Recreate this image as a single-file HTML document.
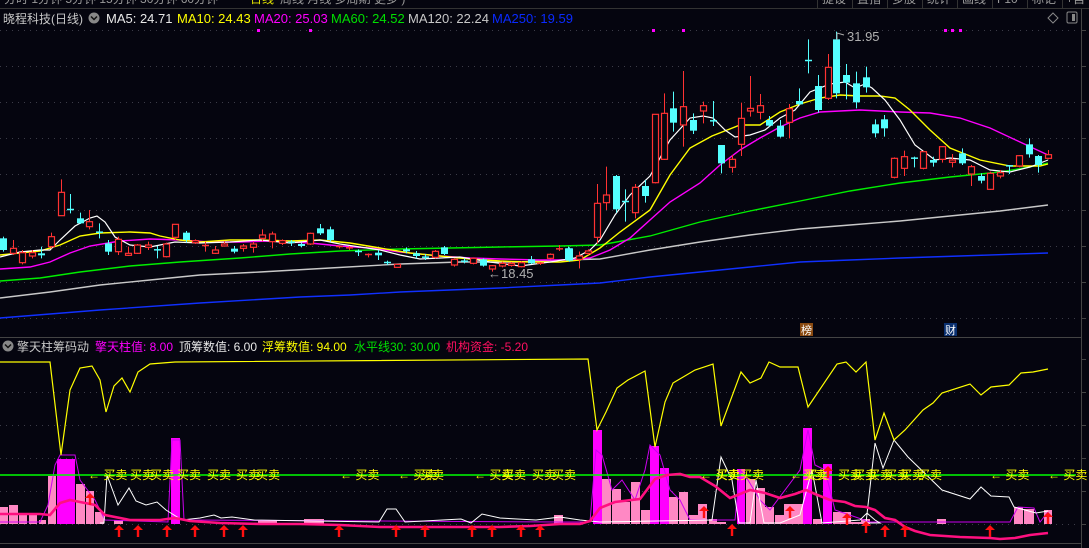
<!DOCTYPE html>
<html><head><meta charset="utf-8">
<style>
html,body{margin:0;padding:0;background:#05050f;width:1089px;height:548px;overflow:hidden;}
svg{display:block;font-family:"Liberation Sans","Noto Sans CJK SC",sans-serif;}
</style></head>
<body>
<svg id="s" width="1089" height="548" viewBox="0 0 1089 548" xmlns="http://www.w3.org/2000/svg">
<rect width="1089" height="548" fill="#05050f"/>
<g fill="#9a9a9a" font-size="12">
<text x="4" y="3">分时  1分钟  5分钟  15分钟  30分钟  60分钟</text>
<text x="250" y="3" fill="#e0e000">日线</text>
<text x="280" y="3">周线  月线  多周期  更多 )</text>
</g>
<line x1="0" y1="8.5" x2="1089" y2="8.5" stroke="#333"/>
<g stroke="#333"><line x1="817.5" y1="0" x2="817.5" y2="8"/><line x1="852.5" y1="0" x2="852.5" y2="8"/><line x1="887.5" y1="0" x2="887.5" y2="8"/><line x1="922.5" y1="0" x2="922.5" y2="8"/><line x1="957.5" y1="0" x2="957.5" y2="8"/><line x1="992.5" y1="0" x2="992.5" y2="8"/><line x1="1027.5" y1="0" x2="1027.5" y2="8"/><line x1="1062.5" y1="0" x2="1062.5" y2="8"/></g>
<g fill="#9a9a9a" font-size="12"><text x="822" y="3">提设</text><text x="857" y="3">置指</text><text x="892" y="3">多股</text><text x="927" y="3">统计</text><text x="962" y="3">画线</text><text x="997" y="3">F10</text><text x="1032" y="3">标记</text><text x="1066" y="3">+自</text></g>

<text x="3" y="23" font-size="12" fill="#c8c8c8">晓程科技(日线)</text>
<circle cx="94" cy="18" r="5.5" fill="#888"/><path d="M91,16.5 L94,19.5 L97,16.5" stroke="#111" stroke-width="1.5" fill="none"/>
<g font-size="13">
<text x="106" y="23" fill="#e8e8e8">MA5: 24.71</text>
<text x="177" y="23" fill="#ffff00">MA10: 24.43</text>
<text x="254" y="23" fill="#ff00ff">MA20: 25.03</text>
<text x="331" y="23" fill="#00e000">MA60: 24.52</text>
<text x="408" y="23" fill="#c8c8c8">MA120: 22.24</text>
<text x="492" y="23" fill="#0a2aff">MA250: 19.59</text>
</g>
<path d="M1053,13 L1058,18 L1053,23 L1048,18 Z" stroke="#888" fill="none"/>
<rect x="1067" y="12" width="10" height="11" rx="1.5" stroke="#888" fill="none"/><rect x="1072" y="14" width="3" height="7" fill="#888"/>

<g id="grid" stroke="#3c3c48" stroke-dasharray="1,5"></g>
<line x1="1081.5" y1="9" x2="1081.5" y2="548" stroke="#444"/>
<line x1="0" y1="337.5" x2="1081" y2="337.5" stroke="#444"/>
<line x1="0" y1="543.5" x2="1081" y2="543.5" stroke="#444"/>

<g id="ma" fill="none" stroke-width="1.2"></g>
<g id="cand"></g>

<g fill="#ff00ff"><rect x="257" y="29" width="3" height="3"/><rect x="309" y="29" width="3" height="3"/><rect x="652" y="29" width="3" height="3"/><rect x="682" y="29" width="3" height="3"/><rect x="944" y="29" width="3" height="3"/><rect x="951" y="29" width="3" height="3"/><rect x="959" y="29" width="3" height="3"/></g>
<path d="M837,33 L837,40 M837,33 L844,35" stroke="#aaa" fill="none"/>
<text x="847" y="41" font-size="13" fill="#b0b0b0">31.95</text>
<text x="488" y="278" font-size="13" fill="#b0b0b0">←18.45</text>
<rect x="800" y="323" width="13" height="13" fill="#8a4a10"/><text x="801" y="334" font-size="11" fill="#fff">榜</text>
<rect x="944" y="323" width="13" height="13" fill="#0a3070"/><text x="945" y="334" font-size="11" fill="#fff">财</text>

<circle cx="8" cy="346" r="5.5" fill="#888"/><path d="M5,344.5 L8,347.5 L11,344.5" stroke="#111" stroke-width="1.5" fill="none"/>
<g font-size="12">
<text x="17" y="351" fill="#c8c8c8">擎天柱筹码动</text>
<text x="95" y="351" fill="#ff00ff">擎天柱值: 8.00</text>
<text x="179" y="351" fill="#e8e8e8">顶筹数值: 6.00</text>
<text x="262" y="351" fill="#ffff00">浮筹数值: 94.00</text>
<text x="354" y="351" fill="#00e000">水平线30: 30.00</text>
<text x="446" y="351" fill="#ff1060">机构资金: -5.20</text>
</g>
<g id="ind"></g>
</svg>
<script>
var NS="http://www.w3.org/2000/svg";
function el(p,t,a){var e=document.createElementNS(NS,t);for(var k in a)e.setAttribute(k,a[k]);p.appendChild(e);return e;}
var g=document.getElementById('grid');
[30,66,102,138,174,210,246,282,318,392,425,458,491,524].forEach(function(y){el(g,'line',{x1:0,y1:y+.5,x2:1080,y2:y+.5});});
var s=document.getElementById('s');
[30,66,102,138,174,210,246,282,318,359,392,425,458,491,524].forEach(function(y){el(s,'line',{x1:1081,y1:y+.5,x2:1086,y2:y+.5,stroke:'#444'});});
var ma=document.getElementById('ma');
function pl(p,pts,c,w){el(p,'polyline',{points:pts.map(function(q){return q.join(',')}).join(' '),stroke:c,'stroke-width':w||1.2,fill:'none'});}
pl(ma,[[0,318],[100,310],[200,303],[300,297],[350,295],[400,292],[450,290],[500,288],[560,285],[600,283],[650,277],[700,272],[750,267],[800,262],[850,260],[900,258],[960,256],[1048,253]],'#1030ff',1.4);
pl(ma,[[0,298],[50,292],[100,285],[150,280],[200,275],[260,272],[330,268],[400,264],[460,262],[520,262],[560,260],[600,259],[650,250],[700,242],[750,235],[800,229],[850,225],[900,221],[950,216],[1000,211],[1048,205]],'#c8c8c8',1.4);
pl(ma,[[0,281],[40,278],[80,272],[130,266],[180,262],[240,258],[290,254],[340,251],[400,249],[450,248],[500,247],[560,246],[600,245],[650,236],[700,222],[750,211],[800,201],[850,191],[900,183],[950,177],[1000,172],[1030,167],[1048,163]],'#00ee00',1.4);
pl(ma,[[0,269],[30,267],[50,262],[70,253],[90,246],[120,241],[150,239],[180,240],[210,242],[240,242],[270,241],[310,243],[340,246],[370,248],[400,252],[440,256],[470,258],[500,259],[540,260],[570,260],[590,258],[610,250],[630,238],[650,220],[670,202],[700,183],[720,165],[740,150],[760,138],[780,127],[800,118],[820,112],[840,111],[860,110],[880,111],[900,112],[930,113],[960,118],[990,128],[1020,142],[1048,155]],'#ff00ff',1.4);
pl(ma,[[0,255],[40,251],[60,245],[80,236],[100,233],[130,232],[150,233],[160,236],[180,240],[200,242],[230,240],[260,240],[290,241],[320,240],[350,243],[380,248],[410,253],[440,256],[470,259],[500,261],[530,262],[560,262],[580,260],[600,248],[620,232],[650,210],[670,175],[690,148],[712,136],[740,125],[760,125],[780,112],[800,104],[820,98],[840,95],[860,96],[880,96],[895,98],[910,110],[930,130],[950,148],[980,160],[1010,166],[1040,166],[1048,164]],'#ffff00',1.4);
pl(ma,[[0,257],[20,252],[40,250],[50,250],[60,240],[75,226],[90,218],[97,216],[105,222],[115,237],[130,245],[150,247],[165,244],[175,242],[200,243],[230,242],[260,240],[290,243],[320,240],[340,244],[380,250],[400,255],[420,259],[440,258],[460,257],[490,262],[520,266],[550,262],[575,258],[590,250],[600,240],[615,215],[630,195],[650,176],[670,140],[690,118],[703,116],[713,118],[725,130],[735,137],[750,135],[765,130],[780,118],[795,110],[810,92],[830,84],[845,82],[855,88],[865,84],[872,88],[885,100],[900,120],[915,145],[935,160],[950,158],[970,160],[990,170],[1010,172],[1030,167],[1048,160]],'#ffffff',1.2);
var cd=document.getElementById('cand');
function candle(x,t,b,h,l,c){
  var col=c=='r'?'#ff3232':'#54ffff';
  el(cd,'line',{x1:x,y1:h,x2:x,y2:l,stroke:col,'stroke-width':1});
  if(b-t<2){el(cd,'line',{x1:x-3.5,y1:t+.5,x2:x+3.5,y2:t+.5,stroke:col,'stroke-width':1.5});return;}
  if(c=='r')el(cd,'rect',{x:x-3,y:t,width:6,height:b-t,fill:'#05050f',stroke:col,'stroke-width':1.2});
  else el(cd,'rect',{x:x-3.5,y:t,width:7,height:b-t,fill:col});
}
var L=[[8,205,240,200,245,'c'],[33,235,250,210,255,'r'],[57,248,278,240,283,'r'],[84,248,258,240,265,'r'],[107,250,256,230,265,'c'],[133,200,230,188,235,'r'],[159,67,137,28,137,'r'],[184,117,120,72,130,'c'],[210,145,160,128,162,'c'],[233,155,170,120,178,'r'],[258,185,190,160,205,'c'],[283,220,245,210,255,'c'],[308,208,245,200,255,'r'],[335,250,256,230,258,'r'],[358,225,250,222,252,'r'],[385,225,232,215,240,'r'],[409,238,242,228,265,'c'],[433,222,260,218,262,'r'],[458,163,202,163,210,'r'],[485,188,210,183,218,'c'],[510,212,218,208,222,'r'],[535,225,230,215,245,'r'],[560,240,250,228,252,'r'],[585,222,228,215,230,'r'],[610,236,245,228,250,'c'],[635,228,235,222,245,'r'],[660,222,232,215,248,'r'],[685,195,205,178,215,'r'],[710,192,215,185,235,'r'],[735,212,220,208,225,'r'],[760,215,220,210,228,'c'],[785,222,228,218,232,'c'],[808,190,222,188,225,'r'],[835,175,190,162,195,'c'],[860,178,210,170,215,'c'],[884,228,232,228,235,'r'],[910,232,236,228,240,'r'],[935,243,248,238,258,'c'],[960,252,257,250,262,'r'],[987,248,256,240,270,'c'],[1010,276,280,272,285,'c'],[1035,283,292,283,292,'r'],[1060,238,244,232,250,'c'],[1085,250,258,243,265,'c'],[1110,260,265,252,270,'c'],[1135,244,262,240,265,'r'],[1160,232,252,228,255,'c'],[1185,268,285,265,290,'r'],[1210,272,276,265,280,'c'],[1235,265,280,262,283,'r'],[1260,268,287,265,290,'c'],[1285,287,297,285,305,'r'],[1310,280,288,275,292,'r'],[1335,280,286,276,290,'r'],[1360,278,290,274,292,'r'],[1385,268,280,258,282,'c'],[1410,278,283,276,285,'r'],[1435,253,265,250,268,'r'],[1460,235,240,225,243,'r'],[1485,235,272,232,275,'c'],[1510,258,268,245,295,'r'],[1535,243,250,238,255,'r']];
L.forEach(function(a){candle(Math.round(a[0]/2.61)+.5,170+a[1]/3,170+a[2]/3,170+a[3]/3,170+a[4]/3,a[5]);});
var R=[[25,655,690,650,692,'c'],[55,678,688,665,715,'r'],[82,663,670,658,672,'r'],[110,520,622,462,640,'r'],[137,495,518,410,540,'r'],[167,438,538,435,548,'c'],[193,513,517,478,575,'c'],[223,472,548,462,565,'r'],[253,468,498,450,518,'c'],[280,253,458,253,460,'r'],[308,250,388,190,390,'r'],[335,235,278,185,305,'c'],[365,230,285,123,350,'r'],[395,270,302,250,312,'c'],[422,227,243,215,280,'r'],[452,271,275,213,288,'c'],[478,345,400,345,430,'c'],[508,388,412,375,428,'r'],[535,265,343,218,378,'r'],[563,235,243,138,260,'r'],[593,227,247,192,268,'r'],[620,270,287,258,290,'c'],[650,287,320,270,323,'c'],[677,236,277,222,325,'r'],[707,213,223,175,225,'c'],[733,90,93,28,130,'c'],[763,168,240,135,248,'c'],[793,112,205,72,210,'r'],[818,28,190,5,205,'c'],[848,135,158,102,208,'c'],[875,160,217,125,235,'c'],[905,142,172,110,188,'c'],[932,283,310,268,322,'c'],[960,268,295,255,320,'c'],[990,385,442,382,445,'r'],[1018,380,415,362,438,'r'],[1047,383,387,380,412,'c'],[1073,365,415,362,418,'r'],[1103,390,398,380,410,'c'],[1130,350,388,348,398,'r'],[1160,390,397,372,412,'r'],[1190,370,400,355,405,'c'],[1216,410,432,405,468,'r'],[1246,438,452,430,460,'c'],[1272,430,478,425,480,'r'],[1302,428,438,420,445,'r'],[1330,406,410,405,432,'c'],[1358,377,408,375,412,'r'],[1388,343,373,325,383,'c'],[1415,378,405,375,428,'c'],[1445,374,385,360,388,'r']];
R.forEach(function(a){candle(Math.round(560+a[0]/2.96)+.5,30+a[1]/3,30+a[2]/3,30+a[3]/3,30+a[4]/3,a[5]);});

var ig=document.getElementById('ind');
var B=524;
var pink=[[0,8,507],[9,18,505],[19,27,515],[29,37,515],[39,46,520],[48,56,476],[76,85,484],[86,94,491],[95,104,512],[114,123,520],[258,277,520],[304,324,519],[554,563,515],[602,611,479],[612,621,489],[621,630,502],[631,640,482],[641,650,510],[669,678,497],[679,688,492],[689,698,515],[698,707,504],[709,717,519],[717,726,522],[746,755,479],[756,765,488],[765,774,507],[775,784,515],[784,794,504],[794,803,504],[813,822,519],[833,842,512],[842,851,512],[851,861,522],[861,870,519],[937,946,519],[1014,1023,507],[1024,1034,509],[1044,1052,510]];
pink.forEach(function(p){el(ig,'rect',{x:p[0],y:p[2],width:p[1]-p[0],height:B-p[2],fill:'#ff88c4'});});
var mag=[[57,75,459],[171,180,438],[593,602,430],[650,659,446],[660,669,468],[737,745,469],[803,812,428],[823,832,464]];
mag.forEach(function(p){el(ig,'rect',{x:p[0],y:p[2],width:p[1]-p[0],height:B-p[2],fill:'#ff00ff'});});
pl(ig,[[0,522],[40,522],[48,505],[55,465],[60,455],[75,455],[80,480],[95,500],[105,520],[168,522],[172,440],[180,440],[184,520],[560,522],[590,522],[596,450],[602,455],[612,490],[622,480],[635,500],[645,470],[650,445],[660,455],[670,490],[680,500],[690,520],[735,520],[740,470],[748,480],[760,500],[770,510],[800,470],[808,430],[815,465],[825,470],[835,510],[870,522],[1010,522],[1018,507],[1034,508],[1040,522],[1048,512]],'#cc00ee',1);
pl(ig,[[100,523],[104,523],[107,475],[118,505],[129,488],[136,501],[146,505],[157,502],[166,510],[182,520],[200,518],[214,515],[221,518],[232,517],[254,520],[379,522],[387,509],[396,509],[405,522],[461,519],[471,523],[482,514],[500,518],[536,520],[560,517],[580,520],[600,522],[712,520],[721,457],[732,480],[739,523],[750,523],[756,480],[764,523],[780,523],[800,515],[812,470],[822,523],[860,520],[867,513],[875,520],[880,523],[866,523],[875,443],[883,468],[894,440],[908,457],[942,490],[970,499],[981,487],[991,496],[1009,497],[1014,507],[1036,513],[1048,511]],'#ffffff',1);
pl(ig,[[0,362],[50,362],[61,455],[70,390],[80,368],[92,366],[100,380],[106,412],[114,386],[122,378],[130,392],[138,372],[150,364],[175,362],[588,359],[597,430],[606,412],[617,388],[628,380],[645,371],[655,447],[665,402],[673,383],[695,370],[713,364],[721,426],[741,372],[750,383],[761,378],[769,362],[780,367],[798,367],[808,407],[837,364],[846,362],[856,372],[866,362],[875,440],[884,413],[894,440],[905,430],[923,410],[933,403],[942,393],[970,384],[981,395],[991,387],[1009,385],[1021,373],[1033,372],[1048,369]],'#ffff00',1.2);
el(ig,'line',{x1:0,y1:475,x2:1076,y2:475,stroke:'#00ff00','stroke-width':1.5});
pl(ig,[[0,514],[40,514],[50,515],[60,503],[70,500],[80,502],[95,505],[105,515],[130,520],[160,520],[175,518],[190,521],[220,523],[260,524],[300,524],[340,525],[380,527],[420,527],[460,527],[500,527],[530,526],[560,524],[580,524],[590,521],[600,508],[615,502],[640,499],[655,479],[667,475],[680,474],[690,477],[700,477],[715,486],[730,498],[750,490],[765,493],[780,498],[795,494],[806,490],[815,494],[830,500],[845,502],[855,506],[866,507],[875,510],[885,518],[895,520],[905,527],[915,531],[930,535],[960,537],[990,538],[1000,539],[1015,538],[1030,535],[1048,533]],'#ff1080',2.6);
var bs=[[88,1],[130,0],[150,0],[177,0],[207,0],[236,0],[256,0],[340,1],[398,1],[420,0],[474,1],[502,0],[532,0],[552,0],[700,1],[716,0],[740,0],[790,1],[803,0],[838,0],[853,0],[868,0],[885,0],[900,0],[918,0],[990,1],[1048,1]];
bs.forEach(function(b){var t=el(ig,'text',{x:b[0],y:479,'font-size':12,fill:'#ffff00'});t.textContent=(b[1]?'← ':'')+'买卖';});
var ar=[[90,493],[119,525],[138,525],[167,525],[195,525],[224,525],[243,525],[339,525],[396,525],[425,525],[472,525],[492,525],[521,525],[540,525],[704,506],[732,524],[790,506],[828,466],[847,513],[866,521],[885,525],[905,525],[990,525],[1048,512]];
ar.forEach(function(a){var x=a[0],y=a[1];el(ig,'path',{d:'M'+x+','+y+' L'+(x+5)+','+(y+5)+' L'+(x+1.2)+','+(y+5)+' L'+(x+1.2)+','+(y+12)+' L'+(x-1.2)+','+(y+12)+' L'+(x-1.2)+','+(y+5)+' L'+(x-5)+','+(y+5)+' Z',fill:'#ff1010'});});
</script>
</body></html>
